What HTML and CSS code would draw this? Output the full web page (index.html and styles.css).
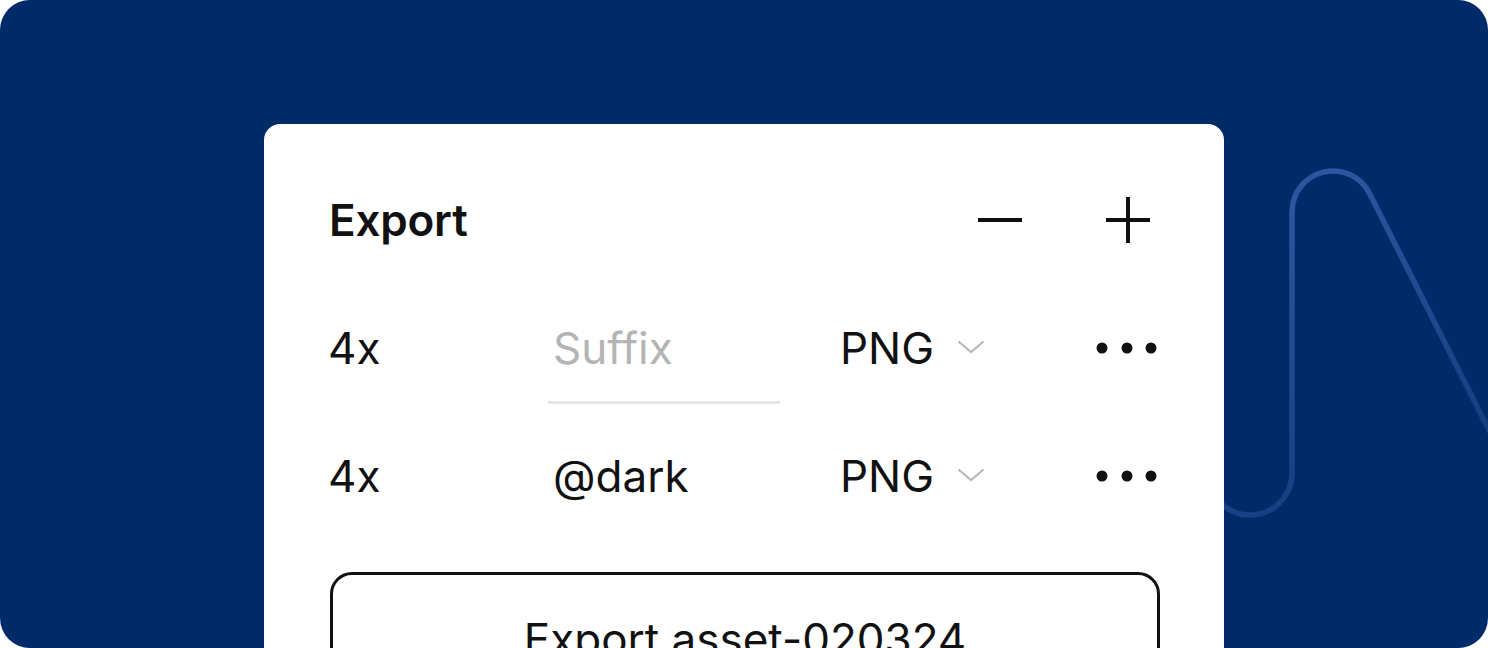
FILE: index.html
```html
<!DOCTYPE html>
<html lang="en">
<head>
<meta charset="utf-8">
<title>Export</title>
<link rel="stylesheet" href="styles.css">
</head>
<body>
<div class="frame">
  <svg class="deco" width="1488" height="648" viewBox="0 0 1488 648" aria-hidden="true">
    <defs>
      <linearGradient id="fade" gradientUnits="userSpaceOnUse" x1="1360" y1="180" x2="1490" y2="440">
        <stop offset="0" stop-color="#2b559c" stop-opacity="1"/>
        <stop offset="1" stop-color="#2b559c" stop-opacity="0.45"/>
      </linearGradient>
    </defs>
    <path d="M1208 473 A42 42 0 0 0 1292 473 L1292 212 A41 41 0 0 1 1369.6 193.5 L1560 571" fill="none" stroke="url(#fade)" stroke-width="5.5"/>
  </svg>

  <section class="card">
    <header class="card-head">
      <h1 class="title">Export</h1>
      <div class="head-actions">
        <button class="icon-btn" aria-label="Remove">
          <svg width="64" height="64" viewBox="0 0 64 64"><path d="M10 32H54" stroke="#111" stroke-width="4"/></svg>
        </button>
        <button class="icon-btn" aria-label="Add">
          <svg width="64" height="64" viewBox="0 0 64 64"><path d="M10 32H54M32 9V55" stroke="#111" stroke-width="4"/></svg>
        </button>
      </div>
    </header>

    <div class="row">
      <span class="scale">4x</span>
      <div class="suffix-field"><span class="placeholder">Suffix</span></div>
      <div class="format">PNG
        <svg class="chev" width="28" height="14" viewBox="0 0 28 14"><path d="M1.5 1.5L14 12L26.5 1.5" fill="none" stroke="#b8b8b8" stroke-width="2.2"/></svg>
      </div>
      <svg class="more" width="62" height="12" viewBox="0 0 62 12"><circle cx="6" cy="6" r="5.5"/><circle cx="31" cy="6" r="5.5"/><circle cx="55" cy="6" r="5.5"/></svg>
    </div>

    <div class="row">
      <span class="scale">4x</span>
      <div class="suffix-value">@dark</div>
      <div class="format">PNG
        <svg class="chev" width="28" height="14" viewBox="0 0 28 14"><path d="M1.5 1.5L14 12L26.5 1.5" fill="none" stroke="#b8b8b8" stroke-width="2.2"/></svg>
      </div>
      <svg class="more" width="62" height="12" viewBox="0 0 62 12"><circle cx="6" cy="6" r="5.5"/><circle cx="31" cy="6" r="5.5"/><circle cx="55" cy="6" r="5.5"/></svg>
    </div>

    <button class="export-btn">Export asset-020324</button>
  </section>
</div>
</body>
</html>
```

FILE: styles.css
```css
html, body {
  margin: 0;
  padding: 0;
  background: #ffffff;
}

body {
  font-family: Inter, "Liberation Sans", sans-serif;
  color: #111;
}

.frame {
  position: relative;
  width: 1488px;
  height: 648px;
  background: #012a69;
  border-radius: 30px;
  overflow: hidden;
  padding-top: 124px;
  box-sizing: border-box;
}

.deco {
  position: absolute;
  left: 0;
  top: 0;
}

.card {
  position: relative;
  z-index: 1;
  margin-left: 264px;
  width: 960px;
  box-sizing: border-box;
  background: #fff;
  border-radius: 16px;
  padding: 32px 64px 0 64px;
  height: 700px;
}

.card-head {
  height: 128px;
  display: flex;
  align-items: center;
  justify-content: space-between;
}

.title {
  margin: 0;
  font-size: 44px;
  font-weight: 600;
  letter-spacing: -0.2px;
  line-height: 1;
  padding-left: 1px;
}

.head-actions {
  display: flex;
  gap: 64px;
}

.icon-btn {
  border: 0;
  background: none;
  padding: 0;
  width: 64px;
  height: 64px;
  display: block;
}

.icon-btn svg {
  display: block;
}

.row {
  height: 128px;
  display: grid;
  grid-template-columns: 220px 292px 1fr auto;
  align-items: center;
  font-size: 44px;
  line-height: 1;
}

.scale {
  display: block;
}

.suffix-field {
  width: 232px;
  height: 110px;
  box-sizing: border-box;
  border-bottom: 3px solid #e6e6e6;
  display: flex;
  align-items: center;
  padding-left: 5px;
  margin-top: 2px;
}

.placeholder {
  color: #b4b4b4;
}

.suffix-value {
  padding-left: 5px;
}

.format {
  display: flex;
  align-items: center;
  gap: 23px;
}

.chev {
  display: block;
  margin-top: -2px;
}

.more {
  display: block;
  fill: #111;
  margin-right: 2px;
}

.export-btn {
  display: block;
  margin: 32px 0 0 2px;
  width: 830px;
  height: 130px;
  box-sizing: border-box;
  border: 3px solid #111;
  border-radius: 22px;
  background: #fff;
  font-family: Inter, "Liberation Sans", sans-serif;
  font-size: 44px;
  color: #111;
  line-height: 60px;
  padding: 4px 0 0;
  text-align: center;
}
```
